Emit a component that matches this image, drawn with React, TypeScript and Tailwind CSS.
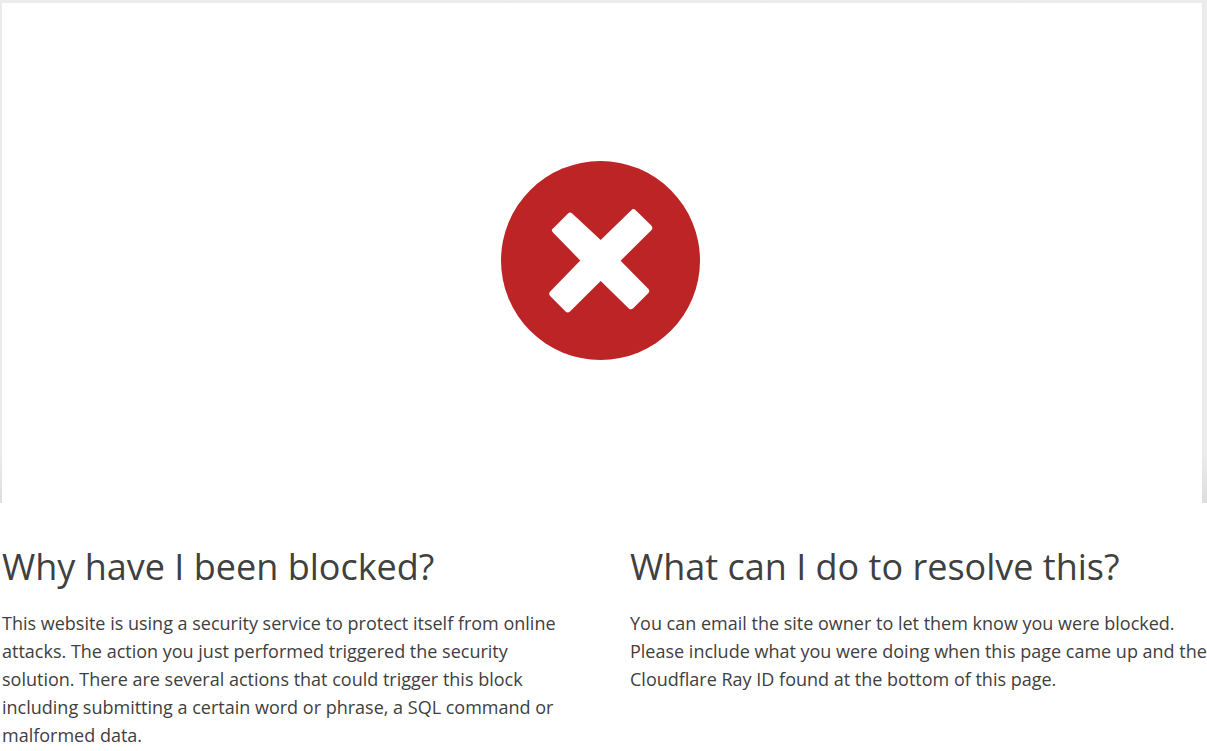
function BlockedIcon() {
  return (
    <svg
      viewBox="12 11 200 200"
      className="h-50 w-50 overflow-visible"
      role="img"
      aria-label="Blocked"
    >
      <circle cx="110.5" cy="110.5" r="99.5" fill="#bd2426" />
      <path
        d="M64 77.4 78 63.6Q80 61.6 82.2 63.6L110.7 90 141.3 60.2Q143.5 58 145.7 60.2L161.3 75.6Q163.5 78 161.3 80.2L130.6 110.7 158.2 138.8Q160.4 141 158.2 143.2L143.2 158.2Q141 160.4 138.8 158.4L110.7 131 80 161.6Q77.8 163.4 75.6 161.6L60.4 146.2Q58 143.8 60.2 141.4L90.3 110.5 63 82.6Q60.6 80.4 62.8 78.4Z"
        fill="#fff"
      />
    </svg>
  );
}

export default function App() {
  return (
    <div className="min-h-screen bg-white font-['Open_Sans',sans-serif] text-[#404040]">
      <div className="bg-linear-to-b from-[#ebebeb] from-90% to-[#dedede] pt-[3px] pr-[5px] pl-[2px]">
        <div className="flex justify-center bg-white pt-[158px] pb-[142px]">
          <BlockedIcon />
        </div>
      </div>

      <main className="grid grid-cols-2 gap-[51px] pt-10 pl-[2px]">
        <section>
          <h2 className="text-4xl leading-12">Why have I been blocked?</h2>
          <p className="mt-[18px] text-lg leading-7">
            This website is using a security service to protect itself from online
            attacks. The action you just performed triggered the security solution.
            There are several actions that could trigger this block including
            submitting a certain word or phrase, a SQL command or malformed data.
          </p>
        </section>

        <section>
          <h2 className="text-4xl leading-12">What can I do to resolve this?</h2>
          <p className="mt-[18px] text-lg leading-7">
            You can email the site owner to let them know you were blocked. Please
            include what you were doing when this page came up and the Cloudflare Ray
            ID found at the bottom of this page.
          </p>
        </section>
      </main>
    </div>
  );
}
